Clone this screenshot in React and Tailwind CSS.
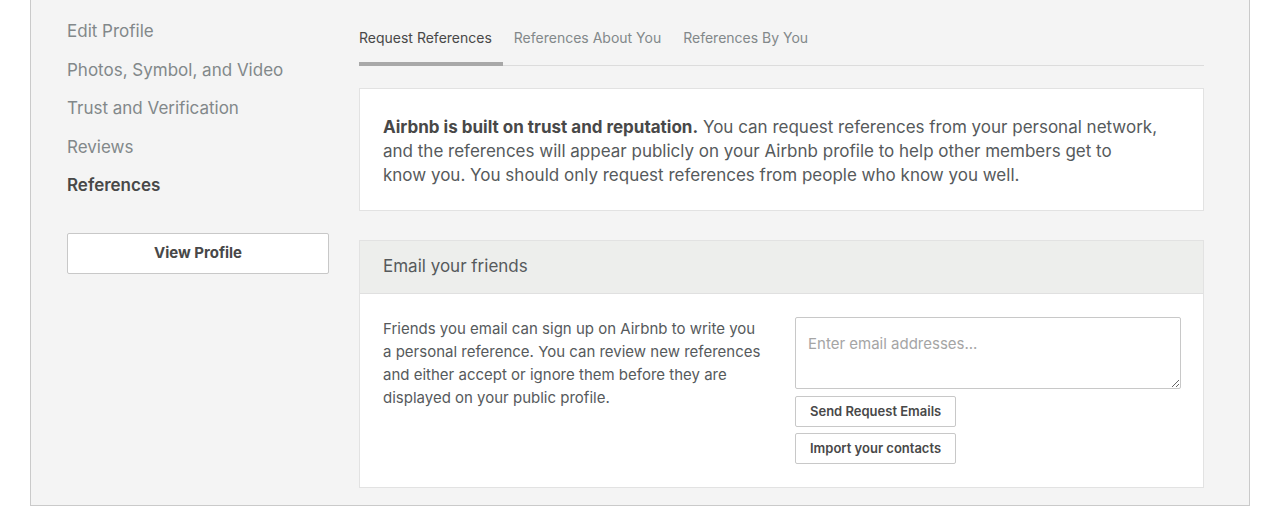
import { useState } from "react";

const sideItems = [
  "Edit Profile",
  "Photos, Symbol, and Video",
  "Trust and Verification",
  "Reviews",
  "References",
];

const tabs = ["Request References", "References About You", "References By You"];

export default function App() {
  const [active, setActive] = useState(0);
  const [emails, setEmails] = useState("");

  return (
    <div className="bg-white min-h-screen" style={{ fontFamily: 'Inter, "Liberation Sans", Arial, sans-serif' }}>
      <div className="w-[1220px] h-[506px] mx-auto bg-[#f4f4f4] border-x border-b border-[#cacaca] flex pl-[36px] pr-[45px]">
        {/* sidebar */}
        <div className="w-[262px] shrink-0 pt-[12px]">
          <ul>
            {sideItems.map((item) => (
              <li
                key={item}
                className={
                  item === "References"
                    ? "h-[38.5px] leading-[38.5px] text-[17px] font-semibold text-[#484848]"
                    : "h-[38.5px] leading-[38.5px] text-[17px] text-[#82888a]"
                }
              >
                {item}
              </li>
            ))}
          </ul>
          <button className="mt-[28px] w-full h-[41px] bg-white border border-[#c8c8c8] rounded-[2px] text-[15px] font-bold text-[#484848]">
            View Profile
          </button>
        </div>

        {/* main */}
        <div className="ml-[30px] flex-1">
          <div className="pt-[28px] flex items-start border-b border-[#dcdcdc]">
            {tabs.map((t, i) => (
              <button
                key={t}
                onClick={() => setActive(i)}
                className={
                  i === active
                    ? "pr-[11px] pb-[14px] leading-[20px] text-[14px] text-[#484848] border-b-4 border-[#a8a8a8] -mb-px"
                    : "px-[11px] pb-[14px] leading-[20px] text-[14px] text-[#82888a] border-b-4 border-transparent -mb-px"
                }
              >
                {t}
              </button>
            ))}
          </div>

          <div className="mt-[22px] bg-white border border-[#e2e2e2] pl-[23px] pr-[10px] pt-[26px] pb-[23px] text-[17px] leading-[24px] text-[#565a5c] whitespace-nowrap">
            <p>
              <strong className="font-bold text-[#484848]">Airbnb is built on trust and reputation.</strong> You can
              request references from your personal network,
              <br />
              and the references will appear publicly on your Airbnb profile to help other members get to
              <br />
              know you. You should only request references from people who know you well.
            </p>
          </div>

          <div className="mt-[29px] bg-white border border-[#e2e2e2]">
            <div className="h-[53px] bg-[#edeeec] border-b border-[#e0e0e0] pl-[23px] flex items-center text-[17px] text-[#565a5c]">
              Email your friends
            </div>
            <div className="flex pl-[23px] pr-[22px] pt-[23px] pb-[23px]">
              <p className="w-[412px] shrink-0 pr-[30px] text-[15px] leading-[23px] text-[#565a5c]">
                Friends you email can sign up on Airbnb to write you a personal reference. You can review new
                references and either accept or ignore them before they are displayed on your public profile.
              </p>
              <div className="flex-1 flex flex-col items-start">
                <textarea
                  value={emails}
                  onChange={(e) => setEmails(e.target.value)}
                  placeholder="Enter email addresses..."
                  className="w-full h-[72px] block bg-white border border-[#c8c8c8] rounded-[2px] px-[12px] pt-[16px] pb-[12px] text-[15px] leading-[20px] text-[#565a5c] placeholder:text-[#a5a5a5] outline-none"
                />
                <button className="mt-[7px] h-[31px] px-[14px] bg-white border border-[#c8c8c8] rounded-[2px] text-[13px] font-semibold text-[#484848]">
                  Send Request Emails
                </button>
                <button className="mt-[6px] h-[31px] px-[14px] bg-white border border-[#c8c8c8] rounded-[2px] text-[13px] font-semibold text-[#484848]">
                  Import your contacts
                </button>
              </div>
            </div>
          </div>
        </div>
      </div>
    </div>
  );
}
